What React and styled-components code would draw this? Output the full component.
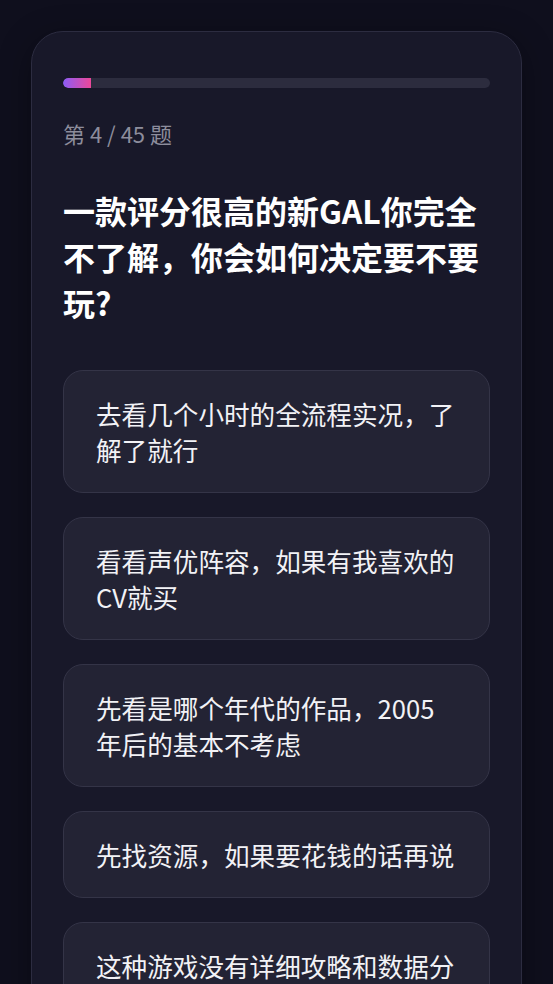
import React from "react";
import styled, { createGlobalStyle } from "styled-components";

const GlobalStyle = createGlobalStyle`
  html, body {
    margin: 0;
    padding: 0;
    background: #0f0f1d;
    font-family: "Noto Sans CJK SC", "Noto Sans", sans-serif;
  }
`;

const Page = styled.div`
  min-height: 100vh;
  padding: 31px 31px 0;
  box-sizing: border-box;
`;

const Card = styled.div`
  background: #181829;
  border: 1px solid #2c2c40;
  border-radius: 32px;
  padding: 46px 31px 40px;
  box-shadow: 0 8px 32px rgba(0, 0, 0, 0.35);
`;

const Track = styled.div`
  height: 10px;
  border-radius: 5px;
  background: #2c2c3e;
  overflow: hidden;
`;

const Fill = styled.div`
  height: 100%;
  border-radius: 5px 0 0 5px;
  background: linear-gradient(90deg, #8b5cf6, #ec4899);
`;

const Counter = styled.div`
  margin-top: 30px;
  font-size: 22px;
  line-height: 31px;
  color: #8d8d9c;
`;

const Question = styled.h2`
  margin: 38px 0 0;
  font-size: 32px;
  line-height: 46px;
  font-weight: 700;
  color: #ffffff;
`;

const Options = styled.div`
  margin-top: 45px;
  display: flex;
  flex-direction: column;
  gap: 24px;
`;

const Option = styled.button`
  display: block;
  width: 100%;
  text-align: left;
  background: #232334;
  border: 1px solid #343447;
  border-radius: 20px;
  padding: 25px 32px 24px;
  font-family: inherit;
  font-size: 25.6px;
  line-height: 36px;
  color: #f2f2f6;
  cursor: pointer;
`;

const options = [
  "去看几个小时的全流程实况，了解了就行",
  "看看声优阵容，如果有我喜欢的CV就买",
  "先看是哪个年代的作品，2005年后的基本不考虑",
  "先找资源，如果要花钱的话再说",
  "这种游戏没有详细攻略和数据分析我是不会玩的",
];

export default function App() {
  const current = 4;
  const total = 45;
  return (
    <Page>
      <GlobalStyle />
      <Card>
        <Track>
          <Fill style={{ width: `${((current - 1) / total) * 100}%` }} />
        </Track>
        <Counter>
          第 {current} / {total} 题
        </Counter>
        <Question>一款评分很高的新GAL你完全不了解，你会如何决定要不要玩?</Question>
        <Options>
          {options.map((o) => (
            <Option key={o}>{o}</Option>
          ))}
        </Options>
      </Card>
    </Page>
  );
}
